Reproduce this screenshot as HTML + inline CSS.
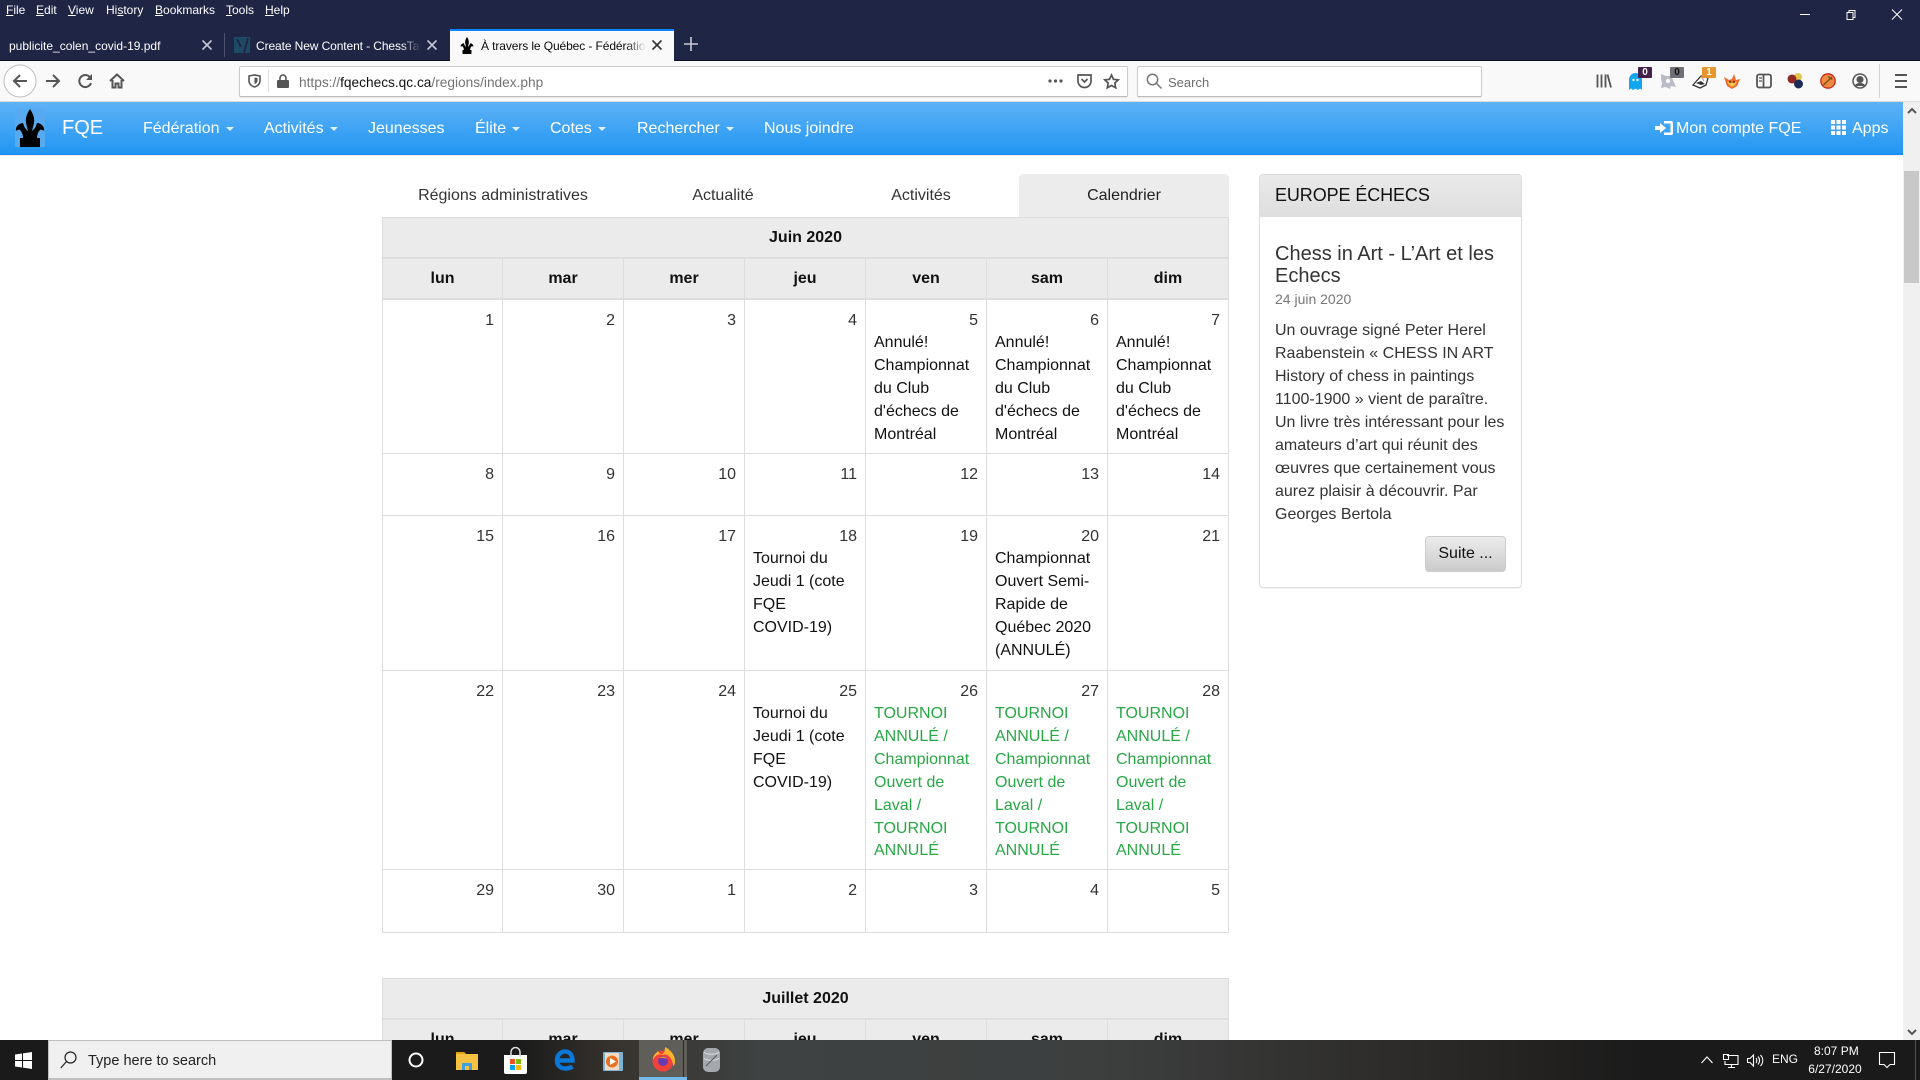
<!DOCTYPE html>
<html lang="fr"><head><meta charset="utf-8"><title>À travers le Québec</title>
<style>
html,body{margin:0;padding:0;width:1920px;height:1080px;overflow:hidden;background:#fff;font-family:"Liberation Sans",Arial,sans-serif;}
.a{position:absolute;white-space:nowrap;}
#top{position:absolute;left:0;top:0;width:1920px;height:60px;background:#1f2544;}
.m{position:absolute;top:3px;font-size:12px;line-height:14px;color:#fff;}
.t{position:absolute;top:38px;font-size:12px;line-height:16px;color:#fff;white-space:nowrap;}
#tb{position:absolute;left:0;top:61px;width:1920px;height:40px;background:#f9f9fa;border-bottom:1px solid #ddd;}
#top2{position:absolute;left:0;top:60px;width:1920px;height:1px;background:#0c0f24;}
.box{position:absolute;top:66px;height:29px;background:#fff;border:1px solid #ccc;border-bottom-color:#bbb;border-radius:2px;box-shadow:0 1px 1px rgba(0,0,0,.08);}
#nav{position:absolute;left:0;top:102px;width:1903px;height:53px;background:linear-gradient(#5fb2f6,#2196f3);border-bottom:1px solid #1a8ae8;box-sizing:border-box;box-shadow:0 1px 2px rgba(0,0,0,.08);}
.n{position:absolute;top:118px;font-size:16px;line-height:22px;color:#fff;white-space:nowrap;}
.c{display:inline-block;width:0;height:0;border-left:4px solid transparent;border-right:4px solid transparent;border-top:4px solid #fff;vertical-align:2px;margin-left:6px;opacity:.85}
#sb{position:absolute;left:1903px;top:102px;width:17px;height:938px;background:#f0f0f0;}
#th{position:absolute;left:1904px;top:171px;width:15px;height:112px;background:#c8c8c8;}
.tab{position:absolute;top:185px;font-size:16px;line-height:22px;color:#333;transform:translateX(-50%);white-space:nowrap;}
table{position:absolute;left:382px;border-collapse:collapse;table-layout:fixed;width:846px;font-size:16px;line-height:1.42857;color:#333;}
td,th{border:1px solid #ddd;padding:10px 8px 6px;vertical-align:top;box-sizing:border-box;}
th{background:#ebebeb;color:#111;text-align:center;padding:3px 0 0;vertical-align:middle;font-weight:bold;border-bottom:2px solid #ddd;}
th.mo{padding-top:3px;}
td .d{text-align:right;display:block;}
td .e{color:#111;display:block;}
td .g{color:#28a745;display:block;}
td .k{white-space:nowrap;}
#card{position:absolute;left:1259px;top:174px;width:263px;height:414px;box-sizing:border-box;border:1px solid #ddd;border-radius:4px;box-shadow:0 1px 1px rgba(0,0,0,.05);}
#ch{height:42px;box-sizing:border-box;background:linear-gradient(#eaeaea,#dedede);border-bottom:1px solid #ddd;padding:0 15px;font-size:18px;line-height:40px;color:#111;letter-spacing:-.1px;border-radius:3px 3px 0 0;}
#btn{position:absolute;left:1425px;top:536px;width:81px;height:36px;box-sizing:border-box;border:1px solid #ccc;border-radius:4px;background:linear-gradient(#ededed,#cbcbcb);font-size:16px;line-height:34px;text-align:center;color:#111;}
#task{position:absolute;left:0;top:1040px;width:1920px;height:40px;background:linear-gradient(90deg,#1a1a1a 0,#1b1b1b 520px,#38342f 620px,#3e4242 760px,#3d3f3f 1100px,#2a2826 1450px,#1a1a1a 1650px);}
#srch{position:absolute;left:48px;top:1040px;width:344px;height:40px;box-sizing:border-box;background:#f0f0f0;border:1px solid #bfbfbf;border-bottom-width:2px;}
svg{position:absolute;overflow:visible;}
.bd{position:absolute;width:14px;height:11px;font-size:10px;line-height:11px;font-weight:bold;text-align:center;border-radius:1px;}
</style></head><body>

<div id="top"></div><div id="top2"></div>
<span class="m" style="left:6px"><u>F</u>ile</span>
<span class="m" style="left:36px"><u>E</u>dit</span>
<span class="m" style="left:68px"><u>V</u>iew</span>
<span class="m" style="left:106px">Hi<u>s</u>tory</span>
<span class="m" style="left:155px"><u>B</u>ookmarks</span>
<span class="m" style="left:226px"><u>T</u>ools</span>
<span class="m" style="left:265px"><u>H</u>elp</span>

<!-- window buttons -->
<svg style="left:1800px;top:9px" width="110" height="12" fill="none" stroke="#fff" stroke-width="1">
<path d="M0 5.500h10"/><path d="M47 3.500h6v7h-6zM49 3.500v-2h6v7h-2"/><path d="M92 .5l10 10M102 .5l-10 10"/></svg>

<!-- tabs -->
<span class="t" style="left:9px">publicite_colen_covid-19.pdf</span>
<svg style="left:202px;top:40px" width="10" height="10" stroke="#c4c6d2" stroke-width="1.600" fill="none"><path d="M.5.5l9 9M9.500.5l-9 9"/></svg>
<div class="a" style="left:224px;top:33px;width:1px;height:24px;background:#4c5170"></div>
<div class="a" style="left:234px;top:37px;width:16px;height:16px;background:#1f4a66"></div>
<svg style="left:234px;top:37px" width="16" height="16" fill="none" stroke="#1f2544" stroke-width="2"><path d="M3 2l4 8M14 1l-4 15"/></svg>
<div class="t" style="left:256px;width:165px;overflow:hidden;letter-spacing:-.1px;-webkit-mask-image:linear-gradient(90deg,#000 88%,transparent);">Create New Content - ChessTalk</div>
<svg style="left:427px;top:40px" width="10" height="10" stroke="#c4c6d2" stroke-width="1.600" fill="none"><path d="M.5.5l9 9M9.500.5l-9 9"/></svg>
<div class="a" style="left:450px;top:29px;width:224px;height:32px;background:#f9f9fa;"></div>
<div class="a" style="left:450px;top:29px;width:224px;height:2px;background:#0a84ff;"></div>
<svg style="left:460px;top:37px" width="14" height="17" viewBox="0 0 30 38" fill="#000"><path d="M15 0C11 6 10 11 11.500 16L13 22C10 20 9 17 8 14C4 14 0 18 1 22C2 21 4 20 5 21C7 23 8 26 8 29H5V38H25V29H22C22 26 23 23 25 21C26 20 28 21 29 22C30 18 26 14 22 14C21 17 20 20 17 22L18.500 16C20 11 19 6 15 0Z"/></svg>
<div class="t" style="left:481px;width:165px;overflow:hidden;color:#0c0c0d;letter-spacing:-.1px;-webkit-mask-image:linear-gradient(90deg,#000 88%,transparent);">À travers le Québec - Fédération</div>
<svg style="left:652px;top:40px" width="10" height="10" stroke="#333" stroke-width="1.600" fill="none"><path d="M.5.5l9 9M9.500.5l-9 9"/></svg>
<svg style="left:684px;top:37px" width="14" height="14" stroke="#c8cad6" stroke-width="1.600" fill="none"><path d="M7 0v14M0 7h14"/></svg>

<!-- toolbar -->
<div id="tb"></div>
<svg style="left:3px;top:64px" width="34" height="34" fill="#fff" stroke="#bdbdbd"><circle cx="17" cy="17" r="16"/></svg>
<svg style="left:12px;top:73px" width="16" height="16" fill="none" stroke="#555" stroke-width="2"><path d="M15 8H2M8 2L2 8l6 6"/></svg>
<svg style="left:45px;top:73px" width="16" height="16" fill="none" stroke="#555" stroke-width="2"><path d="M1 8h13M8 2l6 6-6 6"/></svg>
<svg style="left:77px;top:73px" width="16" height="16" fill="none" stroke="#555" stroke-width="2"><path d="M13.500 5A6 6 0 1 0 14 10"/><path d="M15 1v6H9z" fill="#555" stroke="none"/></svg>
<svg style="left:109px;top:73px" width="16" height="16" fill="none" stroke="#555" stroke-width="2"><path d="M1 8l7-6.500L15 8M3.500 7v7.500h3v-4h3v4h3V7"/></svg>

<div class="box" style="left:239px;width:887px"></div>
<svg style="left:248px;top:74px" width="13" height="14" fill="none" stroke="#555" stroke-width="1.600"><path d="M1 2l5.500-1L12 2v5c0 3-2.500 5-5.500 6C3.500 12 1 10 1 7z"/><path d="M6.500 3.500l3 .5v3c0 1.500-1.500 2.500-3 3.200z" fill="#555" stroke="none"/></svg>
<div class="a" style="left:268px;top:70px;width:1px;height:22px;background:#ddd"></div>
<svg style="left:277px;top:74px" width="12" height="14" fill="#555"><path d="M1 6h10a1 1 0 0 1 1 1v6a1 1 0 0 1-1 1H1a1 1 0 0 1-1-1V7a1 1 0 0 1 1-1z"/><path d="M3 6V4a3 3 0 0 1 6 0v2" fill="none" stroke="#555" stroke-width="1.600"/></svg>
<span class="a" style="left:299px;top:74.500px;font-size:13.700px;line-height:16px;color:#737373">https://<span style="color:#111">fqechecs.qc.ca</span>/regions/index.php</span>
<svg style="left:1048px;top:79px" width="15" height="4" fill="#555"><circle cx="2" cy="2" r="1.600"/><circle cx="7.500" cy="2" r="1.600"/><circle cx="13" cy="2" r="1.600"/></svg>
<svg style="left:1077px;top:74px" width="15" height="14" fill="none" stroke="#555" stroke-width="1.700"><path d="M1 1h13v6a6.500 6.500 0 0 1-13 0z"/><path d="M4.500 5l3 3 3-3" /></svg>
<svg style="left:1104px;top:74px" width="15" height="15" fill="none" stroke="#555" stroke-width="1.700"><path d="M7.500 1l2 4.300 4.700.6-3.400 3.200.9 4.700-4.200-2.300-4.200 2.300.9-4.700L.8 5.900l4.700-.6z"/></svg>

<div class="box" style="left:1137px;width:343px"></div>
<svg style="left:1146px;top:73px" width="16" height="16" fill="none" stroke="#777" stroke-width="1.500"><circle cx="6.500" cy="6.500" r="5.200"/><path d="M10.500 10.500l5 5"/></svg>
<span class="a" style="left:1168px;top:74.500px;font-size:13px;line-height:16px;color:#6d6d6d">Search</span>

<!-- right toolbar icons -->
<svg style="left:1596px;top:73px" width="16" height="16" fill="none" stroke="#555" stroke-width="1.800"><path d="M1.500 1.500v13M5.500 1.500v13M9.500 1.500v13M11.500 1.500l3.500 13"/></svg>
<svg style="left:1629px;top:73px" width="13" height="17" fill="#12a5f0"><path d="M6.500 0C10 0 13 3 13 7v10l-2-1.500L9 17l-2.500-1.500L4 17l-2-1.500L0 17V7C0 3 3 0 6.500 0z"/><circle cx="4.500" cy="7" r="1.200" fill="#fff"/><circle cx="8.500" cy="7" r="1.200" fill="#fff"/></svg>
<div class="bd" style="left:1638px;top:67px;background:#43214d;color:#fff">0</div>
<svg style="left:1660px;top:72px" width="17" height="17" fill="#b9bcc4"><path d="M1 2l5 2h5l1 2 4 9-5-1-1 3-4-2-5 1 1-5-1-4z"/><circle cx="8" cy="9" r="2.200" fill="#f9f9fa"/></svg>
<div class="bd" style="left:1670px;top:67px;background:#6f7077;color:#111">0</div>
<svg style="left:1692px;top:73px" width="17" height="16"><path d="M1 12L9 3l7 2-2 7-6 3z" fill="#fff" stroke="#333" stroke-width="1.300"/><path d="M4 10l5-2 4 3-4 1z" fill="#333"/><path d="M9 3l3 5" stroke="#b88" fill="none"/></svg>
<div class="bd" style="left:1702px;top:67px;background:#e9952e;color:#fff">1</div>
<svg style="left:1724px;top:74px" width="16" height="15"><path d="M0 3l5 3 3-1 2-5 2 6 4-1-3 7-5 3-5-3z" fill="#ef6a28"/><path d="M3 7l5 2 5-2-2 4-3 2-3-2z" fill="#f6c24a"/><path d="M5 8h2M9 8h2" stroke="#222" stroke-width="1.200"/></svg>
<svg style="left:1756px;top:73px" width="16" height="16" fill="none" stroke="#555" stroke-width="1.800"><rect x="1" y="1.500" width="14" height="13" rx="2"/><path d="M7.500 1.500v13"/><path d="M3 5h3M3 8h3" stroke-width="1.200"/></svg>
<svg style="left:1787px;top:72px" width="18" height="18"><circle cx="11" cy="5" r="4" fill="#e6c64a"/><circle cx="5" cy="7" r="4.500" fill="#8f2a22"/><circle cx="11.500" cy="12" r="4.500" fill="#1c2c55"/></svg>
<svg style="left:1820px;top:73px" width="16" height="16"><circle cx="8" cy="8" r="7.200" fill="#ec8b3f" stroke="#c9261d" stroke-width="1.300"/><path d="M3.500 12L12 4M8 3.500l4.500 3" stroke="#7a4a1c" stroke-width="1.300" fill="none"/></svg>
<svg style="left:1852px;top:73px" width="16" height="16" fill="none" stroke="#555" stroke-width="1.500"><circle cx="8" cy="8" r="7"/><circle cx="8" cy="6.500" r="2.800" fill="#555"/><path d="M3.500 13c1-3 8-3 9 0" fill="#555"/></svg>
<div class="a" style="left:1879px;top:64px;width:1px;height:34px;background:#d5d5d5"></div>
<svg style="left:1895px;top:74px" width="12" height="14" fill="#555"><path d="M0 0h12v2H0zM0 6h12v2H0zM0 12h12v2H0z"/></svg>

<!-- page navbar -->
<div id="nav"></div>
<div class="a" style="left:15px;top:109px;width:30px;height:38px;background:#58aaf0"></div>
<svg style="left:15px;top:109px" width="30" height="38" viewBox="0 0 30 38" fill="#000"><path d="M15 0C11 6 10 11 11.500 16L13 22C10 20 9 17 8 14C4 14 0 18 1 22C2 21 4 20 5 21C7 23 8 26 8 29H5V38H25V29H22C22 26 23 23 25 21C26 20 28 21 29 22C30 18 26 14 22 14C21 17 20 20 17 22L18.500 16C20 11 19 6 15 0Z"/></svg>
<span class="n" style="left:62px;top:117px;font-size:20px;">FQE</span>
<span class="n" style="left:143px">Fédération<i class="c"></i></span>
<span class="n" style="left:264px">Activités<i class="c"></i></span>
<span class="n" style="left:368px">Jeunesses</span>
<span class="n" style="left:475px">Élite<i class="c"></i></span>
<span class="n" style="left:550px">Cotes<i class="c"></i></span>
<span class="n" style="left:637px">Rechercher<i class="c"></i></span>
<span class="n" style="left:764px">Nous joindre</span>
<svg style="left:1655px;top:120px" width="18" height="16" fill="#fff"><path d="M0 6h5V3l6 5-6 5v-3H0z"/><path d="M9 1h7a2 2 0 0 1 2 2v10a2 2 0 0 1-2 2H9v-2.500h6.500v-9H9z"/></svg>
<span class="n" style="left:1676px">Mon compte FQE</span>
<svg style="left:1831px;top:120px" width="15" height="15" fill="#fff"><path d="M0 0h4v4H0zM5.500 0h4v4h-4zM11 0h4v4h-4zM0 5.500h4v4H0zM5.500 5.500h4v4h-4zM11 5.500h4v4h-4zM0 11h4v4H0zM5.500 11h4v4h-4zM11 11h4v4h-4z"/></svg>
<span class="n" style="left:1852px">Apps</span>

<!-- scrollbar -->
<div id="sb"></div><div id="th"></div>
<svg style="left:1907px;top:107px" width="10" height="7" fill="none" stroke="#555" stroke-width="2"><path d="M1 6l4-4 4 4"/></svg>
<svg style="left:1907px;top:1029px" width="10" height="7" fill="none" stroke="#555" stroke-width="2"><path d="M1 1l4 4 4-4"/></svg>

<!-- tabs in page -->
<div class="a" style="left:1019px;top:174px;width:210px;height:43px;background:#ececec;border-radius:4px 4px 0 0"></div>
<span class="tab" style="left:503px">Régions administratives</span>
<span class="tab" style="left:723px">Actualité</span>
<span class="tab" style="left:921px">Activités</span>
<span class="tab" style="left:1124px;color:#222">Calendrier</span>

<table style="top:217px">
<colgroup><col style="width:120px"><col style="width:121px"><col style="width:121px"><col style="width:121px"><col style="width:121px"><col style="width:121px"><col style="width:121px"></colgroup>
<tr style="height:40px"><th colspan="7" class="mo">Juin 2020</th></tr>
<tr style="height:41px"><th>lun</th><th>mar</th><th>mer</th><th>jeu</th><th>ven</th><th>sam</th><th>dim</th></tr>
<tr style="height:154px"><td><span class="d">1</span></td><td><span class="d">2</span></td><td><span class="d">3</span></td><td><span class="d">4</span></td>
<td><span class="d">5</span><span class="e">Annulé! Championnat du Club d'échecs de Montréal</span></td>
<td><span class="d">6</span><span class="e">Annulé! Championnat du Club d'échecs de Montréal</span></td>
<td><span class="d">7</span><span class="e">Annulé! Championnat du Club d'échecs de Montréal</span></td></tr>
<tr style="height:62px"><td><span class="d">8</span></td><td><span class="d">9</span></td><td><span class="d">10</span></td><td><span class="d">11</span></td><td><span class="d">12</span></td><td><span class="d">13</span></td><td><span class="d">14</span></td></tr>
<tr style="height:155px"><td><span class="d">15</span></td><td><span class="d">16</span></td><td><span class="d">17</span></td>
<td><span class="d">18</span><span class="e">Tournoi du Jeudi 1 (cote FQE <span class="k">COVID-19)</span></span></td>
<td><span class="d">19</span></td>
<td><span class="d">20</span><span class="e">Championnat Ouvert Semi-Rapide de Québec 2020 (ANNULÉ)</span></td>
<td><span class="d">21</span></td></tr>
<tr style="height:199px"><td><span class="d">22</span></td><td><span class="d">23</span></td><td><span class="d">24</span></td>
<td><span class="d">25</span><span class="e">Tournoi du Jeudi 1 (cote FQE <span class="k">COVID-19)</span></span></td>
<td><span class="d">26</span><span class="g">TOURNOI ANNULÉ / Championnat Ouvert de Laval / TOURNOI ANNULÉ</span></td>
<td><span class="d">27</span><span class="g">TOURNOI ANNULÉ / Championnat Ouvert de Laval / TOURNOI ANNULÉ</span></td>
<td><span class="d">28</span><span class="g">TOURNOI ANNULÉ / Championnat Ouvert de Laval / TOURNOI ANNULÉ</span></td></tr>
<tr style="height:63px"><td><span class="d">29</span></td><td><span class="d">30</span></td><td><span class="d">1</span></td><td><span class="d">2</span></td><td><span class="d">3</span></td><td><span class="d">4</span></td><td><span class="d">5</span></td></tr>
</table>

<table style="top:978px">
<colgroup><col style="width:120px"><col style="width:121px"><col style="width:121px"><col style="width:121px"><col style="width:121px"><col style="width:121px"><col style="width:121px"></colgroup>
<tr style="height:40px"><th colspan="7" class="mo">Juillet 2020</th></tr>
<tr style="height:41px"><th>lun</th><th>mar</th><th>mer</th><th>jeu</th><th>ven</th><th>sam</th><th>dim</th></tr>
</table>

<!-- sidebar -->
<div id="card"><div id="ch">EUROPE ÉCHECS</div></div>
<div class="a" style="left:1275px;top:243px;width:232px;white-space:normal;font-size:20px;line-height:22px;color:#333">Chess in Art - L’Art et les Echecs</div>
<span class="a" style="left:1275px;top:289px;font-size:14px;line-height:20px;color:#777">24 juin 2020</span>
<div class="a" style="left:1275px;top:319px;width:232px;white-space:normal;font-size:16px;line-height:23px;color:#333">Un ouvrage signé Peter Herel<br>Raabenstein « CHESS IN ART<br>History of chess in paintings<br>1100-1900 » vient de paraître.<br>Un livre très intéressant pour les<br>amateurs d’art qui réunit des<br>œuvres que certainement vous<br>aurez plaisir à découvrir. Par<br>Georges Bertola</div>
<div id="btn">Suite ...</div>

<!-- taskbar -->
<div id="task"></div>
<svg style="left:15px;top:1052px" width="17" height="17" fill="#fff"><path d="M0 2.500L7 1.500v6.500H0zM8 1.400L17 0v8H8zM0 9h7v6.500L0 14.500zM8 9h9v8L8 15.600z"/></svg>
<div id="srch"></div>
<svg style="left:60px;top:1051px" width="17" height="18" fill="none" stroke="#222" stroke-width="1.200"><circle cx="10.500" cy="6.500" r="5.500"/><path d="M6.500 10.500L.8 17"/></svg>
<span class="a" style="left:88px;top:1052px;font-size:14.500px;line-height:18px;color:#222">Type here to search</span>
<svg style="left:408px;top:1052px" width="16" height="16" fill="none" stroke="#fff" stroke-width="2"><circle cx="8" cy="8" r="6.500"/></svg>
<svg style="left:456px;top:1051px" width="22" height="19"><path d="M0 1h8l2 2h12v16H0z" fill="#f5c242"/><path d="M0 1h8l2 2H0z" fill="#e2a21a"/><path d="M6 19v-6a1 1 0 0 1 1-1h8a1 1 0 0 1 1 1v6h-3v-4H9v4z" fill="#3f9fe0"/></svg>
<svg style="left:504px;top:1048px" width="23" height="26"><path d="M0 7h23v17a2 2 0 0 1-2 2H2a2 2 0 0 1-2-2z" fill="#fff"/><path d="M7 9V4a4.500 4.500 0 0 1 9 0v5" fill="none" stroke="#ddd" stroke-width="1.500"/><path d="M6 11h5v5H6z" fill="#f25022"/><path d="M12 11h5v5h-5z" fill="#7fba00"/><path d="M6 17h5v5H6z" fill="#00a4ef"/><path d="M12 17h5v5h-5z" fill="#ffb900"/></svg>
<svg style="left:555px;top:1049px" width="20" height="22" fill="none" stroke="#0a78d7" stroke-width="4.500"><path d="M2 11.500h15.500C17.500 6 14.500 2.500 10 2.500S2 6.500 2 11.500 5.500 19.500 10.500 19.500c3 0 5-.7 7-2"/></svg>
<svg style="left:603px;top:1052px" width="20" height="19"><rect x="0" y="0" width="20" height="19" rx="1" fill="#7eb3d2"/><rect x="2" y="1" width="14" height="17" fill="#f0dcc8"/><circle cx="9" cy="9.500" r="6" fill="#e8711f"/><path d="M7 6l6 3.500L7 13z" fill="#fff"/></svg>
<div class="a" style="left:639px;top:1040px;width:48px;height:40px;background:#605e58"></div>
<div class="a" style="left:683px;top:1040px;width:1px;height:37px;background:#2a2c2c"></div>
<div class="a" style="left:639px;top:1077px;width:48px;height:3px;background:#76b9ed"></div>
<svg style="left:651px;top:1047px" width="24" height="25"><circle cx="12" cy="14" r="10.500" fill="#f0413a"/><path d="M2 13C2 7 6 6 7 4c1 2 2 3 4 3 2 0 3-3 3-7 4 2 10 7 10 14 0 2-.6 4-1.600 5.500C21 9 15 6 12 8 8 6 4 8 2 13z" fill="#ffb32c"/><circle cx="12" cy="14" r="5" fill="#6a3bb0"/><path d="M8 11c3-2 7-2 8 1-2-1-5-1-8-1z" fill="#ff8a2c"/></svg>
<svg style="left:703px;top:1048px" width="17" height="24"><rect width="17" height="24" rx="5" fill="#a5a8ad"/><path d="M1 4c2 3 13 3 15 0M1 10c2 3 13 3 15 0" fill="none" stroke="#ddd"/><path d="M3 18L14 7" stroke="#55585c"/></svg>

<!-- tray -->
<svg style="left:1701px;top:1056px" width="12" height="8" fill="none" stroke="#fff" stroke-width="1.100"><path d="M.5 7l5.500-6 5.500 6"/></svg>
<svg style="left:1723px;top:1054px" width="16" height="14" fill="none" stroke="#fff" stroke-width="1.100"><path d="M4 1.500h11v9H2V7M8.500 10.500v3M5 13.500h7"/><path d="M.5.500h5v5h-5z"/></svg>
<svg style="left:1747px;top:1054px" width="16" height="13" fill="none" stroke="#fff" stroke-width="1.100"><path d="M.5 4.500h2.500L6.500 1v11L3 8.500H.5z"/><path d="M9 4c1 1.500 1 3.500 0 5M11 2.500c2 2.500 2 5.500 0 8M13.500 1c3 3.500 3 7.500 0 11"/></svg>
<span class="a" style="left:1772px;top:1052px;font-size:12px;line-height:15px;color:#fff">ENG</span>
<span class="a" style="left:1814px;top:1044px;width:42px;text-align:center;font-size:12px;line-height:15px;color:#fff">8:07 PM</span>
<span class="a" style="left:1806px;top:1062px;width:58px;text-align:center;font-size:12px;line-height:15px;color:#fff">6/27/2020</span>
<svg style="left:1879px;top:1052px" width="16" height="16" fill="none" stroke="#fff" stroke-width="1.100"><path d="M.5.500h15v12H11l-3 3-3-3H.5z"/></svg>
<div class="a" style="left:1915px;top:1040px;width:1px;height:40px;background:#555"></div>
</body></html>
